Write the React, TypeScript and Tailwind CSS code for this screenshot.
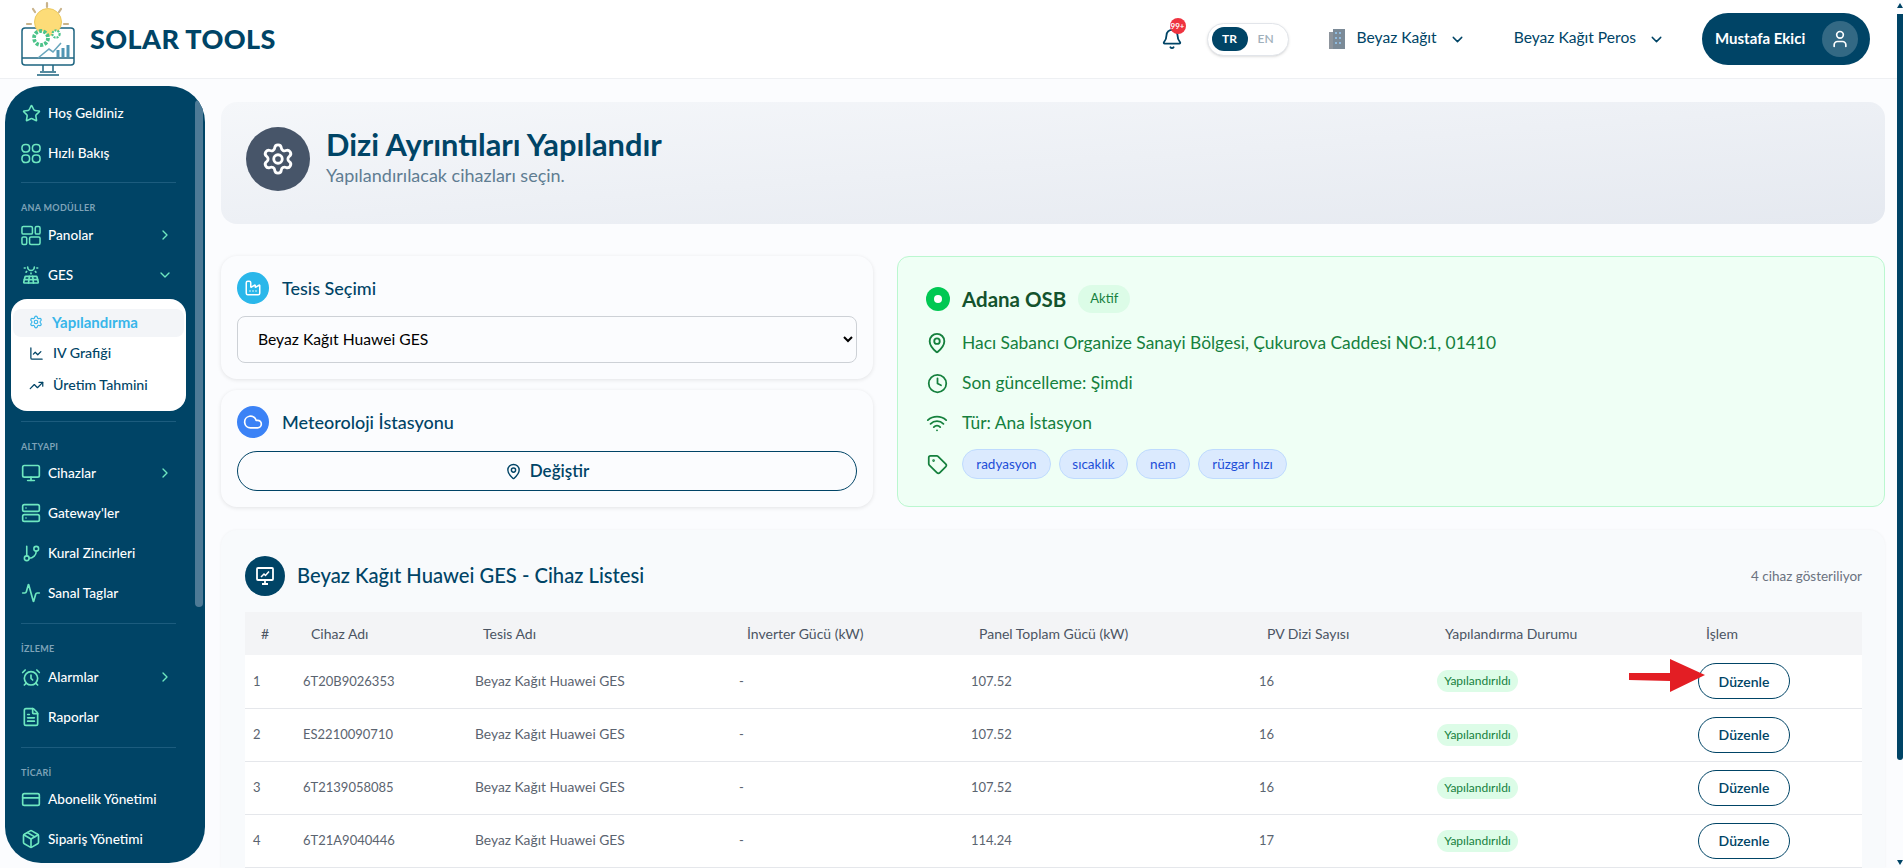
import type { ReactNode } from 'react';
import {
  Activity,
  AlarmClock,
  Bell,
  ChartLine,
  ChevronDown,
  ChevronRight,
  Clock,
  Cloud,
  CreditCard,
  Factory,
  FileText,
  GitBranch,
  MapPin,
  Monitor,
  Package,
  Server,
  Settings,
  Star,
  Tag,
  TrendingUp,
  User,
  Wifi,
} from 'lucide-react';
import { TbSolarPanel2 } from 'react-icons/tb';

const QuickIcon = () => (
  <svg width="21" height="21" viewBox="0 0 21 21" fill="none" stroke="currentColor" strokeWidth="1.6">
    <rect x="1" y="1" width="8" height="8" rx="3.4" />
    <rect x="12" y="1" width="8" height="8" rx="3.4" />
    <rect x="1" y="12" width="8" height="8" rx="3.4" />
    <rect x="12" y="12" width="8" height="8" rx="3.4" />
  </svg>
);

const PanelsIcon = () => (
  <svg width="21" height="21" viewBox="0 0 21 21" fill="none" stroke="currentColor" strokeWidth="1.6">
    <rect x="1" y="1" width="11" height="8" rx="1.5" />
    <rect x="15" y="1" width="5" height="8" rx="1.5" />
    <rect x="1" y="12" width="5" height="8" rx="1.5" />
    <rect x="9" y="12" width="11" height="8" rx="1.5" />
  </svg>
);

const Logo = () => (
  <svg width="56" height="76" viewBox="0 0 56 76" fill="none">
    <g stroke="#c9b38a" strokeWidth="2.2" strokeLinecap="round">
      <path d="M27 2v4M13 8l2 3M41 8l-2 3M7 23h4M44 23h4" />
    </g>
    <rect x="2" y="27" width="52" height="37" rx="3" fill="#fff" stroke="#1d6480" strokeWidth="1.5" />
    <circle cx="28" cy="21" r="13.5" fill="#fddc78" stroke="#ecc95f" />
    <path d="M2 57h52" stroke="#1d6480" strokeWidth="1.4" />
    <path d="M23 64v6M33 64v6M17 74h22M20 71h16" stroke="#1d6480" strokeWidth="1.5" />
    <circle cx="21" cy="37" r="7" fill="#fff" stroke="#4cc38a" strokeWidth="3.8" strokeDasharray="3 1.4" />
    <circle cx="36" cy="33" r="3.6" fill="#fff" stroke="#4cc38a" strokeWidth="2.2" strokeDasharray="2 1" />
    <path d="M18 57l11-9 4 3 8-9" stroke="#6aa7bd" strokeWidth="1.6" />
    <path d="M38 56v-7M43 56v-9M48 56v-12" stroke="#4f95b4" strokeWidth="3" />
  </svg>
);

const NavRow = ({ icon, label, chevron }: { icon: ReactNode; label: string; chevron?: 'right' | 'down' }) => (
  <div className="flex h-10 items-center gap-[7px] pb-[2px] pl-4 pr-8 text-[13.6px] font-medium text-white">
    <span className="flex w-[20px] shrink-0 justify-center text-[#6ee7c0]">{icon}</span>
    <span className="flex-1 whitespace-nowrap">{label}</span>
    {chevron === 'right' && <ChevronRight size={16} className="text-[#6ee7c0]" />}
    {chevron === 'down' && <ChevronDown size={16} className="text-[#6ee7c0]" />}
  </div>
);

const Divider = ({ className }: { className: string }) => (
  <div className={`ml-4 h-px w-[155px] bg-[#1c5c7e] ${className}`} />
);

const SectionLabel = ({ text, className }: { text: string; className: string }) => (
  <div className={`ml-4 mt-5 h-[10px] text-[9px] font-bold leading-[10px] tracking-[0.3px] text-[#7ea3b8] ${className}`}>
    {text}
  </div>
);

const Sidebar = () => (
  <aside className="relative ml-[5px] mt-[7px] h-[777px] w-[200px] shrink-0 overflow-hidden rounded-[36px] bg-[#004466] pt-2">
    <div className="absolute right-[2px] top-[14px] h-[507px] w-2 rounded-full bg-[#4d7a96]" />
    <NavRow icon={<Star size={19} />} label="Hoş Geldiniz" />
    <NavRow icon={<QuickIcon />} label="Hızlı Bakış" />
    <Divider className="mt-2" />
    <SectionLabel text="ANA MODÜLLER" className="mb-[3px]" />
    <NavRow icon={<PanelsIcon />} label="Panolar" chevron="right" />
    <NavRow icon={<TbSolarPanel2 size={21} />} label="GES" chevron="down" />
    <div className="ml-[6px] mt-[3px] h-[112px] w-[175px] rounded-[16px] bg-white pt-[10px]">
      <div className="mx-[2px] flex h-[28px] items-center gap-[9px] rounded-lg bg-[#f3f5f8] pb-[2px] pl-4 text-[15px] font-bold text-[#38b6ea]">
        <Settings size={14} />
        Yapılandırma
      </div>
      <div className="flex h-[32px] items-center gap-[9px] pl-[18px] text-[14.2px] font-medium text-[#004466]">
        <ChartLine size={15} />
        IV Grafiği
      </div>
      <div className="flex h-[32px] items-center gap-[9px] pl-[18px] text-[14.2px] font-medium text-[#004466]">
        <TrendingUp size={15} />
        Üretim Tahmini
      </div>
    </div>
    <Divider className="mt-[10px]" />
    <SectionLabel text="ALTYAPI" className="mb-[2px]" />
    <NavRow icon={<Monitor size={20} />} label="Cihazlar" chevron="right" />
    <NavRow icon={<Server size={20} />} label="Gateway'ler" />
    <NavRow icon={<GitBranch size={19} />} label="Kural Zincirleri" />
    <NavRow icon={<Activity size={20} />} label="Sanal Taglar" />
    <Divider className="mt-[9px]" />
    <SectionLabel text="İZLEME" className="mb-1" />
    <NavRow icon={<AlarmClock size={21} />} label="Alarmlar" chevron="right" />
    <NavRow icon={<FileText size={20} />} label="Raporlar" />
    <Divider className="mt-[9px]" />
    <SectionLabel text="TİCARİ" className="mb-[2px]" />
    <NavRow icon={<CreditCard size={21} />} label="Abonelik Yönetimi" />
    <NavRow icon={<Package size={20} />} label="Sipariş Yönetimi" />
  </aside>
);

const Header = () => (
  <header className="flex h-[79px] items-center border-b border-[#eef0f3] bg-white pl-5 pr-[27px]">
    <Logo />
    <span className="ml-[14px] text-[27px] font-black tracking-[0.4px] text-[#004466]">SOLAR TOOLS</span>
    <div className="relative ml-auto mr-6 text-[#004466]">
      <Bell size={22} />
      <span className="absolute -top-[10px] left-[9px] flex h-4 w-4 items-center justify-center rounded-full bg-[#ef3340] text-[8px] font-bold text-white">
        99+
      </span>
    </div>
    <div className="flex h-[33px] w-[82px] items-center gap-[10px] rounded-full border border-[#e2e5ea] bg-white pl-1 shadow-sm">
      <span className="flex h-6 w-9 items-center justify-center rounded-full bg-[#004466] text-[12px] font-bold text-white">TR</span>
      <span className="text-[12px] font-semibold text-[#9fb0bb]">EN</span>
    </div>
    <svg width="18" height="20" viewBox="0 0 18 20" className="ml-[39px]">
      <rect x="1" y="3" width="6" height="17" fill="#8d949c" />
      <rect x="5" y="0" width="12" height="20" fill="#7b8a97" />
      <path d="M7 3h2v2H7zM11 3h2v2h-2zM7 8h2v2H7zM11 8h2v2h-2zM7 13h2v2H7zM11 13h2v2h-2z" fill="#8fb9dc" />
    </svg>
    <span className="ml-[11px] pb-[2px] text-[15.6px] text-[#004466]">Beyaz Kağıt</span>
    <ChevronDown size={17} className="ml-3 text-[#004466]" />
    <span className="ml-[48px] pb-[2px] text-[15.6px] text-[#004466]">Beyaz Kağıt Peros</span>
    <ChevronDown size={17} className="ml-3 text-[#004466]" />
    <div className="ml-[37px] flex h-[52px] w-[168px] items-center justify-between rounded-full bg-[#004466] pl-[13px] pr-3">
      <span className="pb-[2px] text-[15px] font-bold text-white">Mustafa Ekici</span>
      <span className="flex h-9 w-9 items-center justify-center rounded-full bg-white/20 text-white">
        <User size={20} />
      </span>
    </div>
  </header>
);

const InfoLine = ({ icon, text }: { icon: ReactNode; text: string }) => (
  <div className="flex h-10 items-center gap-[14px] text-[17.4px] text-[#15803d]">
    <span className="flex w-[22px] justify-center">{icon}</span>
    {text}
  </div>
);

const rows = [
  { id: '6T20B9026353', power: '107.52', pv: '16' },
  { id: 'ES2210090710', power: '107.52', pv: '16' },
  { id: '6T2139058085', power: '107.52', pv: '16' },
  { id: '6T21A9040446', power: '114.24', pv: '17' },
];

const headers = ['#', 'Cihaz Adı', 'Tesis Adı', 'İnverter Gücü (kW)', 'Panel Toplam Gücü (kW)', 'PV Dizi Sayısı', 'Yapılandırma Durumu', 'İşlem'];

const ChartMonitor = () => (
  <svg width="20" height="20" viewBox="0 0 20 20" fill="none" stroke="#fff" strokeWidth="1.8">
    <rect x="2" y="2" width="16" height="12" rx="1" />
    <path d="M7 18h6M10 14v4" />
    <path d="M6 11l3-3 1.5 1.5L14 5.5" strokeWidth="1.5" />
  </svg>
);

const DeviceTable = () => (
  <table className="w-[1617px] table-fixed border-collapse text-[13px]">
    <colgroup>
      <col className="w-[50px]" />
      <col className="w-[172px]" />
      <col className="w-[264px]" />
      <col className="w-[232px]" />
      <col className="w-[288px]" />
      <col className="w-[178px]" />
      <col className="w-[261px]" />
      <col className="w-[172px]" />
    </colgroup>
    <thead>
      <tr className="h-[43px] bg-[#f3f4f6] text-[14px]">
        {headers.map((h) => (
          <th key={h} className="pl-4 text-left font-normal text-[#4b5563]">
            {h}
          </th>
        ))}
      </tr>
    </thead>
    <tbody>
      {rows.map((r, i) => (
        <tr key={r.id} className="h-[53px] border-b border-[#e5e7eb] bg-white text-[#5b6470]">
          <td className="pl-2">{i + 1}</td>
          <td className="pl-2">{r.id}</td>
          <td className="pl-2 text-[13.8px]">Beyaz Kağıt Huawei GES</td>
          <td className="pl-2">-</td>
          <td className="pl-2">{r.power}</td>
          <td className="pl-2">{r.pv}</td>
          <td className="pl-2">
            <span className="inline-flex h-[22px] w-[81px] items-center justify-center rounded-full bg-[#dcfce7] text-[12px] text-[#15803d]">
              Yapılandırıldı
            </span>
          </td>
          <td className="pl-2">
            <button className="h-9 w-[92px] rounded-full border border-[#004466] bg-white text-[14px] font-semibold text-[#004466]">
              Düzenle
            </button>
          </td>
        </tr>
      ))}
    </tbody>
  </table>
);

export default function App() {
  return (
    <div className="flex h-[868px] w-[1903px] overflow-hidden bg-[#fbfcfe] font-['Lato',sans-serif]">
      <div className="relative w-[1897px] shrink-0">
        <Header />
        <div className="flex">
          <Sidebar />
          <main className="ml-4 w-[1664px] pt-[23px]">
            <section className="flex h-[122px] items-start gap-4 rounded-2xl bg-gradient-to-br from-[#f5f7fa] to-[#e5e9f0] pl-[25px] pt-[25px]">
              <span className="flex h-16 w-16 items-center justify-center rounded-full bg-[#475569] text-white">
                <Settings size={34} />
              </span>
              <div>
                <h1 className="text-[30.8px] font-bold leading-9 text-[#004466]">Dizi Ayrıntıları Yapılandır</h1>
                <p className="text-[18px] leading-6 text-[#5f7d92]">Yapılandırılacak cihazları seçin.</p>
              </div>
            </section>

            <div className="mt-8 grid grid-cols-[652px_1fr] gap-6">
              <div className="flex flex-col gap-[11px]">
                <div className="h-[123px] rounded-2xl bg-[#fbfcfe] p-4 shadow-[0_1px_4px_rgba(0,0,0,0.1)]">
                  <div className="flex items-center gap-[13px]">
                    <span className="flex h-8 w-8 items-center justify-center rounded-full bg-[#2ab7ea] text-white">
                      <Factory size={18} />
                    </span>
                    <span className="text-[18px] font-medium text-[#004466]">Tesis Seçimi</span>
                  </div>
                  <select className="mt-3 h-[47px] w-full rounded-lg border border-[#cdd1d6] pb-[2px] pl-4 pr-2 text-[15.7px] text-black">
                    <option>Beyaz Kağıt Huawei GES</option>
                  </select>
                </div>
                <div className="h-[117px] rounded-2xl bg-[#fbfcfe] p-4 shadow-[0_1px_4px_rgba(0,0,0,0.1)]">
                  <div className="flex items-center gap-[13px]">
                    <span className="flex h-8 w-8 items-center justify-center rounded-full bg-[#3b82f6] text-white">
                      <Cloud size={20} />
                    </span>
                    <span className="text-[18px] font-medium text-[#004466]">Meteoroloji İstasyonu</span>
                  </div>
                  <button className="mt-[13px] flex h-10 w-full items-center justify-center gap-2 rounded-full border border-[#004466] text-[17px] font-semibold text-[#004466]">
                    <MapPin size={17} />
                    Değiştir
                  </button>
                </div>
              </div>

              <div className="h-[251px] rounded-xl border border-[#bbf7d0] bg-[#effff5] pl-7 pt-[27px]">
                <div className="flex h-[30px] items-center">
                  <span className="flex h-6 w-6 items-center justify-center rounded-full bg-[#00c853]">
                    <span className="h-2 w-2 rounded-full bg-white" />
                  </span>
                  <span className="ml-3 text-[20.5px] font-bold text-[#14532d]">Adana OSB</span>
                  <span className="ml-3 flex h-7 w-[52px] items-center justify-center rounded-full bg-[#dcfce7] text-[13px] text-[#15803d]">
                    Aktif
                  </span>
                </div>
                <div className="mt-[9px]">
                  <InfoLine icon={<MapPin size={22} />} text="Hacı Sabancı Organize Sanayi Bölgesi, Çukurova Caddesi NO:1, 01410" />
                  <InfoLine icon={<Clock size={21} />} text="Son güncelleme: Şimdi" />
                  <InfoLine icon={<Wifi size={22} />} text="Tür: Ana İstasyon" />
                </div>
                <div className="mt-[6px] flex items-center gap-[14px]">
                  <span className="flex w-[22px] justify-center text-[#15803d]">
                    <Tag size={21} />
                  </span>
                  <div className="flex gap-2">
                    {[
                      { t: 'radyasyon', w: 'w-[89px]' },
                      { t: 'sıcaklık', w: 'w-[69px]' },
                      { t: 'nem', w: 'w-[54px]' },
                      { t: 'rüzgar hızı', w: 'w-[89px]' },
                    ].map((tag) => (
                      <span
                        key={tag.t}
                        className={`flex h-[30px] items-center justify-center rounded-full border border-[#bfdbfe] bg-[#dbeafe] text-[13.5px] text-[#1d4ed8] ${tag.w}`}
                      >
                        {tag.t}
                      </span>
                    ))}
                  </div>
                </div>
              </div>
            </div>

            <section className="mt-[23px] rounded-t-2xl bg-[#f8fafc] pl-6 pr-[23px] pt-[26px] shadow-[0_0_3px_rgba(0,0,0,0.05)]">
              <div className="flex h-10 items-center">
                <span className="flex h-10 w-10 items-center justify-center rounded-full bg-[#004466]">
                  <ChartMonitor />
                </span>
                <span className="ml-3 pb-[2px] text-[20.2px] font-medium text-[#004466]">Beyaz Kağıt Huawei GES - Cihaz Listesi</span>
                <span className="ml-auto text-[13.5px] text-[#6b7280]">4 cihaz gösteriliyor</span>
              </div>
              <div className="mt-4">
                <DeviceTable />
              </div>
            </section>
          </main>
        </div>
        <svg width="78" height="36" viewBox="0 0 78 36" className="absolute left-[1628px] top-[658px]">
          <path d="M1 15h41V1l35 16-35 17V23l-41-1z" fill="#e31e24" />
        </svg>
      </div>
      <div className="relative w-[6px] bg-[#fbfcfe]">
        <svg width="6" height="5" viewBox="0 0 6 5" className="absolute left-0 top-[3px]">
          <path d="M3 0l3 5H0z" fill="#004466" />
        </svg>
        <div className="absolute left-0 top-[14px] h-[746px] w-[6px] rounded-b bg-[#004466]" />
        <svg width="6" height="5" viewBox="0 0 6 5" className="absolute bottom-[3px] left-0">
          <path d="M3 5l3-5H0z" fill="#004466" />
        </svg>
      </div>
    </div>
  );
}
